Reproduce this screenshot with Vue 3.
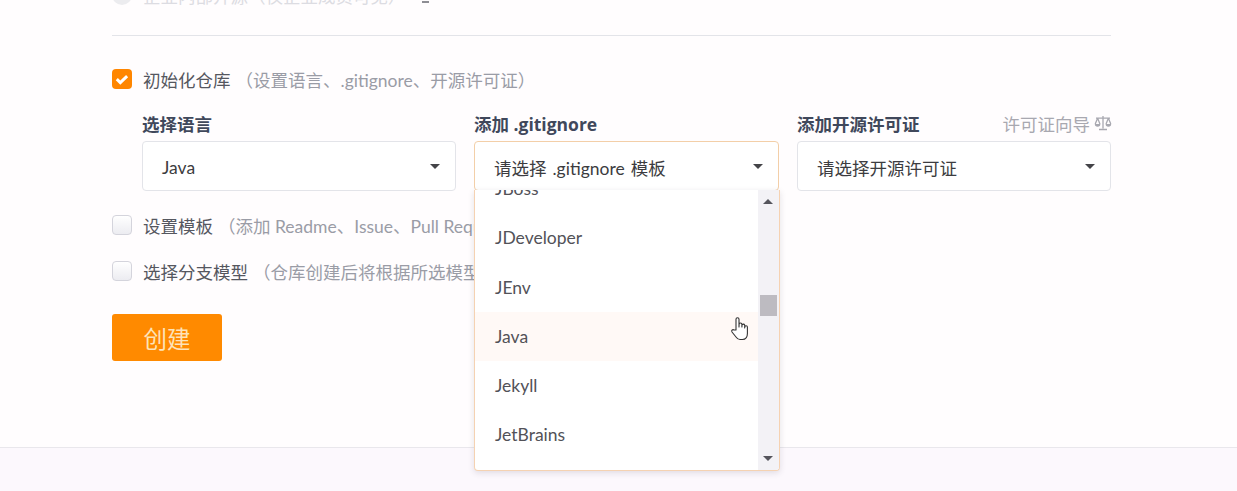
<script setup>
const options = [
  { name: 'JBoss' },
  { name: 'JDeveloper' },
  { name: 'JEnv' },
  { name: 'Java', active: true },
  { name: 'Jekyll' },
  { name: 'JetBrains' },
]
const columns = [
  { label: '选择语言', value: 'Java', cls: 'plain' },
  { label: '添加 .gitignore', value: '请选择 .gitignore 模板', cls: 'open' },
  { label: '添加开源许可证', value: '请选择开源许可证', cls: 'plain', guide: true },
]
</script>

<template>
  <div class="page">
    <main class="form">
      <div class="clipped">
        <span class="radio"></span>
        <span class="clipped-text">企业内部开源（仅企业成员可见）</span>
        <i class="clipped-mark"></i>
      </div>
      <hr class="rule" />
      <label class="check-row first">
        <span class="box checked">
          <svg viewBox="0 0 20 20" width="20" height="20"><path d="M4.800 10.200l3.500 3.400 6.800-6.400" fill="none" stroke="#fff" stroke-width="3" /></svg>
        </span>
        <span class="title">初始化仓库</span>
        <span class="hint">（设置语言、.gitignore、开源许可证）</span>
      </label>
      <div class="selects">
        <div v-for="c in columns" :key="c.label" class="col" :class="c.cls">
          <div class="col-head">
            <span class="col-label">{{ c.label }}</span>
            <span v-if="c.guide" class="guide">许可证向导
              <svg viewBox="0 0 18 16" width="18" height="16"><path d="M9 1v12.500M5 14.500h8M2 3.200h14M3.600 3.200L1.200 9M3.600 3.200L6 9M14.400 3.200L12 9M14.400 3.200L16.800 9" fill="none" stroke="#a8a8b0" stroke-width="1.300" /><path d="M.8 9h5.600a2.800 2.800 0 0 1-5.600 0zM11.600 9h5.600a2.800 2.800 0 0 1-5.600 0z" fill="#a8a8b0" /></svg>
            </span>
          </div>
          <div class="select">
            <span class="value">{{ c.value }}</span>
            <i class="caret"></i>
          </div>
        </div>
      </div>
      <label class="check-row second">
        <span class="box"></span>
        <span class="title">设置模板</span>
        <span class="hint">（添加 Readme、Issue、Pull Request 模板文件）</span>
      </label>
      <label class="check-row third">
        <span class="box"></span>
        <span class="title">选择分支模型</span>
        <span class="hint">（仓库创建后将根据所选模型创建分支）</span>
      </label>
      <button class="create">创建</button>
    </main>
    <footer class="foot"></footer>

    <div class="menu">
      <div class="list">
        <div v-for="o in options" :key="o.name" class="item" :class="{ active: o.active }">{{ o.name }}</div>
      </div>
      <div class="track">
        <i class="up"></i>
        <i class="thumb"></i>
        <i class="down"></i>
      </div>
    </div>

    <svg class="cursor" viewBox="0 0 20 26" width="20" height="26">
      <path d="M6 14V3.200a1.500 1.500 0 0 1 3 0V11l.1-2.600a1.400 1.400 0 0 1 2.800 0V11l.1-1.800a1.400 1.400 0 0 1 2.700 0V12l.1-1a1.300 1.300 0 0 1 2.600 0v6.500c0 3.500-1.800 6-5 6H10c-2 0-3-1-4-2.500L2 16c-1-1.600.8-3 2-2z" fill="#fff" stroke="#333" stroke-width="1.100" stroke-linejoin="round" />
    </svg>
  </div>
</template>

<style>
html, body { margin: 0; background: #fff; }
</style>

<style scoped>
.page {
  position: relative;
  height: 491px;
  width: 1237px;
  overflow: hidden;
  background: #fffdfe;
  display: flex;
  flex-direction: column;
  font-family: Lato, "Noto Sans CJK SC", sans-serif;
  font-size: 17.5px;
  color: #40485b;
}
.form {
  flex: 1;
  width: 999px;
  margin-left: 112px;
  margin-top: -16px;
  display: flex;
  flex-direction: column;
  align-items: stretch;
}
.clipped {
  height: 22px;
  display: flex;
  align-items: center;
  color: #dcdce2;
}
.radio {
  width: 20px;
  height: 20px;
  border-radius: 50%;
  background: #ececef;
  margin-right: 11px;
}
.clipped-text { white-space: nowrap; }
.clipped-mark {
  align-self: flex-end;
  width: 7px;
  height: 2px;
  margin: 0 0 3px 16px;
  background: #8e8e94;
}
.rule {
  border: 0;
  border-top: 1px solid #e3e4e9;
  margin: 29px 0 0;
}
.check-row {
  display: flex;
  align-items: center;
  height: 22px;
  white-space: nowrap;
}
.check-row.first { margin-top: 32px; }
.check-row.second { margin-top: 23px; }
.check-row.third { margin-top: 24px; }
.box {
  box-sizing: border-box;
  width: 20px;
  height: 20px;
  border: 1px solid #d4d4dc;
  border-radius: 4px;
  background: linear-gradient(#fff, #ececf1);
  margin-right: 11px;
  flex: none;
}
.box.checked {
  border: 0;
  background: #ff8600;
}
.box svg { display: block; }
.title { color: #55575f; }
.hint {
  color: #9a9ca6;
  margin-left: 5px;
}
.selects {
  display: grid;
  grid-template-columns: 314px 305px 314px;
  column-gap: 18px;
  margin-left: 30px;
  margin-top: 22px;
}
.col-head {
  height: 22px;
  display: flex;
  justify-content: space-between;
  align-items: center;
  margin-bottom: 7px;
}
.col-label {
  font-family: "Open Sans", "Noto Sans CJK SC", sans-serif;
  font-weight: 700;
  color: #40485b;
}
.guide {
  display: flex;
  align-items: center;
  gap: 4px;
  color: #a8a8b0;
  margin-right: -1px;
}
.select {
  box-sizing: border-box;
  height: 50px;
  border: 1px solid #e3e4e9;
  border-radius: 4px;
  background: #fff;
  display: flex;
  align-items: center;
  justify-content: space-between;
  padding: 0 15px 0 19px;
  color: #3c3c40;
}
.value {
  padding-top: 2px;
  word-spacing: 1.500px;
}
.open .select { border-color: #f3cfa8; }
.caret {
  width: 0;
  height: 0;
  border-left: 5px solid transparent;
  border-right: 5px solid transparent;
  border-top: 5px solid #444448;
}
.create {
  width: 110px;
  height: 47px;
  margin-top: 32px;
  border: 0;
  border-radius: 3px;
  background: #ff8a00;
  color: #fde3b8;
  font-family: inherit;
  font-size: 23.500px;
  padding: 0;
}
.foot {
  height: 43px;
  flex: none;
  border-top: 1px solid #e9e7ec;
  background: #fcf8fd;
}
.menu {
  position: absolute;
  left: 474px;
  top: 190px;
  width: 306px;
  height: 281px;
  box-sizing: border-box;
  border: 1px solid #f5d2b2;
  border-top: 0;
  border-radius: 0 0 4px 4px;
  background: #fff;
  box-shadow: 0 2px 6px rgba(60, 50, 70, .14);
  display: flex;
  overflow: hidden;
}
.list {
  flex: 1;
  overflow: hidden;
  color: #525258;
}
.item {
  height: 49.250px;
  line-height: 49.250px;
  padding-left: 20px;
}
.item:first-child { margin-top: -26px; }
.item.active { background: #fff9f6; }
.track {
  width: 21px;
  background: #f3f2f6;
  position: relative;
  flex: none;
}
.up, .down {
  position: absolute;
  left: 5px;
  width: 0;
  height: 0;
  border-left: 5px solid transparent;
  border-right: 5px solid transparent;
}
.up { top: 9px; border-bottom: 5px solid #55555c; }
.down { bottom: 9px; border-top: 5px solid #55555c; }
.thumb {
  position: absolute;
  left: 2px;
  top: 105px;
  width: 17px;
  height: 21px;
  background: #bdbbc1;
}
.cursor {
  position: absolute;
  left: 730px;
  top: 316px;
}
</style>
